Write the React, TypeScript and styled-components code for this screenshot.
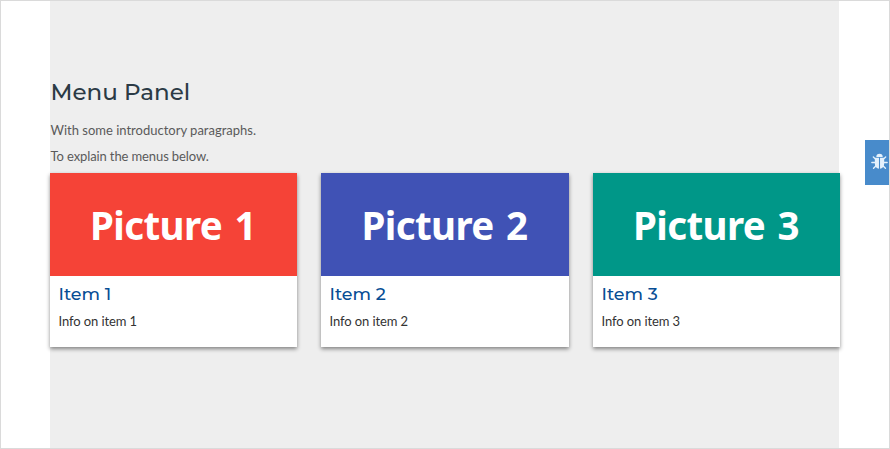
import React from 'react';
import styled, { createGlobalStyle } from 'styled-components';

const GlobalStyle = createGlobalStyle`
  * { box-sizing: border-box; }
  body { margin: 0; background: #fff; font-family: Lato, sans-serif; }
  h1, h2, p { margin: 0; font-weight: 400; }
`;

const Page = styled.main`
  display: flex;
  width: 890px;
  height: 449px;
  border: 1px solid #dadada;
  overflow: hidden;
`;

const Panel = styled.section`
  width: 790px;
  height: 447px;
  margin-left: 49px;
  flex: none;
  padding-top: 74px;
  background: linear-gradient(to right, #eee 789px, #fff 789px);
`;

const Title = styled.h1`
  && { font-weight: 500; }
  height: 34px;
  line-height: 34px;
  margin: 0 0 8px 0.5px;
  font-family: Montserrat, Inter, sans-serif;
  font-size: 23px;
  letter-spacing: 0;
  color: #2b3a45;
`;

const Intro = styled.p<{ $spacing?: number }>`
  height: 26px;
  line-height: 26px;
  padding-left: 0.5px;
  font-size: 13px;
  letter-spacing: ${({ $spacing = 0 }) => $spacing}px;
  color: #5a5a5a;
`;

const Cards = styled.div`
  display: grid;
  grid-template-columns: 247px 248px 247px;
  justify-content: space-between;
  margin-top: 4px;
`;

const Card = styled.article`
  height: 174px;
  background: #fff;
  box-shadow: 0 2px 4px rgba(0, 0, 0, 0.45);
`;

const Picture = styled.div<{ $color: string }>`
  display: flex;
  align-items: center;
  justify-content: center;
  height: 103px;
  background: ${({ $color }) => $color};
  color: #fff;
  font: 700 38.5px/1 'Noto Sans', sans-serif;
  padding: 1px 1px 0 0;
  letter-spacing: -0.6px;
  word-spacing: 3px;
  white-space: pre;
`;

const ItemTitle = styled.h2`
  && { font-weight: 500; }
  padding: 5px 8px 0 8.5px;
  height: 32px;
  line-height: 26px;
  font-family: Montserrat, Inter, sans-serif;
  font-size: 17.5px;
  letter-spacing: 0;
  color: #064d94;
`;

const ItemInfo = styled.p`
  padding: 0 8.5px;
  line-height: 27px;
  font-size: 13px;
  letter-spacing: -0.1px;
  color: #333;
`;

const DebugButton = styled.button`
  display: flex;
  align-items: center;
  justify-content: center;
  flex: none;
  width: 24px;
  height: 45px;
  margin-top: 139px;
  margin-left: auto;
  padding: 0 0 2px 4px;
  border: 0;
  background: #488bcb;
  color: #e4f1fc;
`;

const BugIcon = () => (
  <svg width="17" height="17" viewBox="0 0 16 16" fill="none" stroke="currentColor">
    <path d="M5 3.7a3 3 0 0 1 6 0z" fill="currentColor" stroke="none" />
    <path d="M3.6 4.5h3.9v10.3C5.3 14.6 3.6 12.6 3.6 10zM8.5 4.5h3.9V10c0 2.6-1.7 4.6-3.9 4.8z" fill="currentColor" stroke="none" />
    <path d="M4.5 6 2.2 3.7M11.5 6l2.3-2.3M4.5 9H.8M11.5 9h3.7M4.8 12l-2.4 2.4M11.2 12l2.4 2.4" strokeWidth="1.3" strokeLinecap="round" />
  </svg>
);

const items = [
  { number: 1, color: '#f54337' },
  { number: 2, color: '#4052b5' },
  { number: 3, color: '#009788' },
];

export default function App() {
  return (
    <>
      <GlobalStyle />
      <Page>
        <Panel>
          <Title>Menu Panel</Title>
          <Intro>With some introductory paragraphs.</Intro>
          <Intro $spacing={-0.11}>To explain the menus below.</Intro>
          <Cards>
            {items.map(({ number, color }) => (
              <Card key={number}>
                <Picture $color={color}>{`Picture ${number}`}</Picture>
                <ItemTitle>Item {number}</ItemTitle>
                <ItemInfo>Info on item {number}</ItemInfo>
              </Card>
            ))}
          </Cards>
        </Panel>
        <DebugButton aria-label="Debug"><BugIcon /></DebugButton>
      </Page>
    </>
  );
}
